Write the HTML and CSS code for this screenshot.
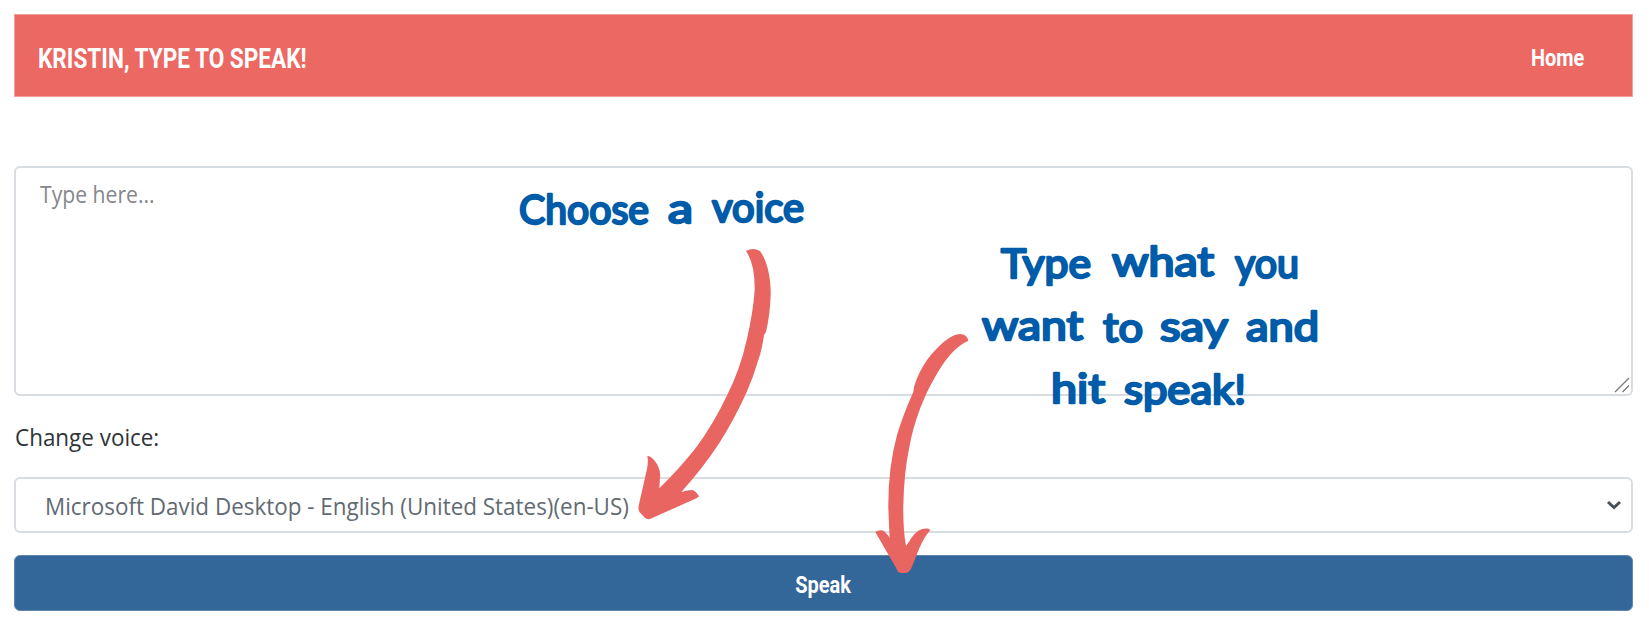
FILE: index.html
```html
<!DOCTYPE html>
<html lang="en">
<head>
<meta charset="utf-8">
<title>Type to Speak</title>
<link rel="stylesheet" href="styles.css">
</head>
<body>
<header class="navbar">
  <span class="brand">KRISTIN, TYPE TO SPEAK!</span>
  <a class="nav-link">Home</a>
</header>
<main class="form">
  <div class="textarea">
    <span class="placeholder">Type here...</span>
    <svg class="grip" width="18" height="18" viewBox="0 0 18 18"><path d="M2 16L16 2M9.500 16L16 9.500"/></svg>
  </div>
  <div class="label"><span class="label-text">Change voice:</span></div>
  <div class="select">
    <span class="option">Microsoft David Desktop - English (United States)(en-US)</span>
    <svg class="chevron" width="16" height="10" viewBox="0 0 16 10"><path d="M2 2L8 7.500L14 2"/></svg>
  </div>
  <div class="button"><span class="button-text">Speak</span></div>
</main>
<svg class="notes" width="1649" height="628" viewBox="0 0 1649 628">
  <g class="arrow">
    <path d="M746 251Q753 247 760 251C768 262 771 280 770.700 295Q770 315 766 332L764 335Q762 350 758 361Q753 378 746.700 392Q735 418 720 442Q703 468 681.300 492Q688 490 692 490Q696 491 699 496.300L697 498L650 519Q647 519.500 645 518L639.500 512Q638 509 638.700 505.500L647 469Q648.500 461 647.300 456Q650 455.500 654 460Q660 467 660.200 475L659.300 488.300Q680 468 696.700 446.700Q714 423 726.700 396Q740 370 746.700 340Q753 313 754.700 290Q755 264 746 251Z"/>
    <path d="M968.300 340.700Q967 334 960 334C952 334 939 344 927 360Q918 373 914 387L913.300 392Q903 415 897 435Q888 468 888.300 508L889.600 537.700Q886 532 882 530.300Q878 530 875.300 532L896.700 569Q898 573 901 573H906Q909 572.500 911 569L919 549Q924 537 930 530.500Q930 528 926 528.500C915 529 912 538 906 546Q903 530 903.300 506Q904 473 909 449C914 420 925 393 938 372Q952 348 968.300 340.700Z"/>
  </g>
  <g class="handwriting">
    <text x="519" y="223.500" textLength="130" lengthAdjust="spacingAndGlyphs">Choose</text>
    <text x="668" y="223" textLength="25" lengthAdjust="spacingAndGlyphs">a</text>
    <text x="712" y="222" textLength="92" lengthAdjust="spacingAndGlyphs">voice</text>
    <text x="1001" y="277.500" textLength="90" lengthAdjust="spacingAndGlyphs">Type</text>
    <text x="1112" y="275.500" textLength="102" lengthAdjust="spacingAndGlyphs">what</text>
    <text x="1235" y="277.500" textLength="64" lengthAdjust="spacingAndGlyphs">you</text>
    <text x="982" y="340" textLength="101" lengthAdjust="spacingAndGlyphs">want</text>
    <text x="1103" y="341.500" textLength="40" lengthAdjust="spacingAndGlyphs">to</text>
    <text x="1160" y="341" textLength="68" lengthAdjust="spacingAndGlyphs">say</text>
    <text x="1246" y="341" textLength="73" lengthAdjust="spacingAndGlyphs">and</text>
    <text x="1051" y="403" textLength="54" lengthAdjust="spacingAndGlyphs">hit</text>
    <text x="1124" y="404" textLength="122" lengthAdjust="spacingAndGlyphs">speak!</text>
  </g>
</svg>
</body>
</html>
```
FILE: styles.css
```css
* { box-sizing: border-box; }
body {
  margin: 0;
  padding: 14px 16px 0 14px;
  height: 628px;
  overflow: hidden;
  background: #fff;
  font-family: "Open Sans", sans-serif;
  font-size: 23px;
  position: relative;
}
.navbar {
  height: 83px;
  padding: 0 48px 0 23px;
  background: #ec6863;
  border: 1px solid #f3a09c;
  display: flex;
  align-items: center;
  justify-content: space-between;
  color: #fff;
  font-family: Roboto, sans-serif;
  font-weight: 700;
}
.brand {
  font-size: 28px;
  line-height: 34px;
  padding-top: 7px;
  transform: scaleX(.807);
  transform-origin: left;
}
.nav-link {
  font-size: 24px;
  line-height: 30px;
  padding-top: 4px;
  transform: scaleX(.83);
  transform-origin: right;
}
.form {
  padding-top: 69px;
  display: flex;
  flex-direction: column;
}
.textarea, .select {
  border: 2px solid #d8dde2;
  border-radius: 6px;
  display: flex;
  justify-content: space-between;
}
.textarea { height: 230px; padding: 10px 0 0 24px; }
.placeholder, .label-text, .option {
  line-height: 32px;
  transform-origin: left;
  white-space: nowrap;
}
.placeholder { color: #85888c; transform: scaleX(.92); }
.label-text { transform: scaleX(.975); }
.option { transform: scaleX(.975); padding-top: 1px; }
.grip {
  align-self: flex-end;
  fill: none;
  stroke: #777;
  stroke-width: 1.3;
}
.label { height: 81px; padding: 25px 0 0 1px; display: flex; color: #303439; }
.select {
  height: 56px;
  padding: 0 9px 0 29px;
  align-items: center;
  color: #626a72;
}
.chevron { fill: none; stroke: #495057; stroke-width: 3; }
.button {
  margin-top: 22px;
  height: 56px;
  border: 1px solid #6287ae;
  border-radius: 6px;
  background: #336699;
  color: #fff;
  display: flex;
  align-items: center;
  justify-content: center;
  font-family: Roboto, sans-serif;
  font-weight: 700;
}
.button-text { transform: scaleX(.87); padding-top: 5px; }
.notes { position: absolute; left: 0; top: 0; }
.arrow { fill: #e96561; }
.handwriting {
  font-family: Lato, sans-serif;
  font-size: 40px;
  font-weight: 400;
  fill: #005ca8;
  stroke: #005ca8;
  stroke-width: 2.4;
  stroke-linejoin: round;
}
```
